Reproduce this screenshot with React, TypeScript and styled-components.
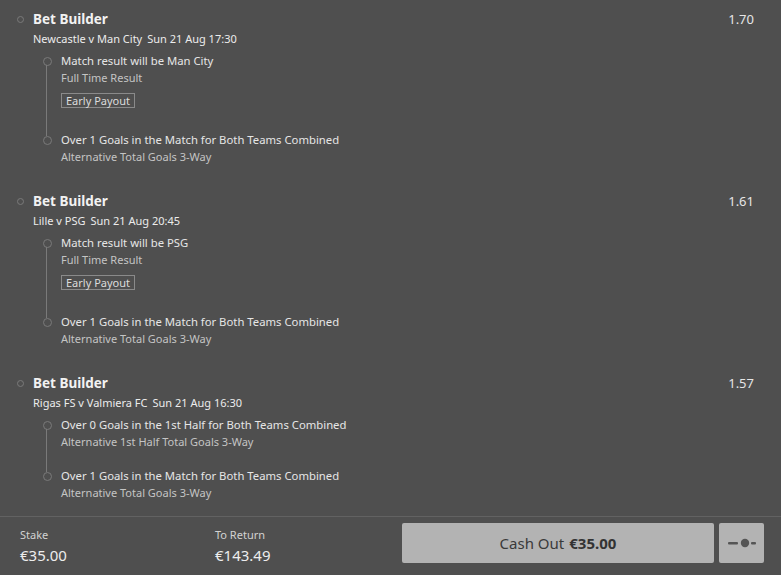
import React from "react";
import styled, { createGlobalStyle } from "styled-components";

const Global = createGlobalStyle`
  html, body { margin: 0; padding: 0; background: #4f4f4f; }
  body { font-family: "Noto Sans", "Open Sans", sans-serif; color: #e8e8e8; }
  * { box-sizing: border-box; }
`;

const Page = styled.div`
  width: 781px;
  height: 575px;
  display: flex;
  flex-direction: column;
  background: #4f4f4f;
  overflow: hidden;
`;

const List = styled.div`
  flex: 1;
  display: flex;
  flex-direction: column;
  overflow: hidden;
`;

const Bet = styled.section`
  padding: 9px 27px 17px 0;
  display: flex;
  flex-direction: column;
`;

const Header = styled.div`
  display: flex;
  align-items: center;
  height: 20px;
`;

const Ring = styled.span`
  width: 7px;
  height: 7px;
  border-radius: 50%;
  border: 1px solid #7a7a7a;
  margin: 0 9px 0 17px;
  flex: none;
`;

const Title = styled.h2`
  margin: 0;
  flex: 1;
  font-size: 13.5px;
  font-weight: 700;
  color: #f2f2f2;
  line-height: 20px;
`;

const Odds = styled.span`
  font-size: 13px;
  color: #e6e6e6;
`;

const Event = styled.div`
  margin: 2px 0 0 33px;
  font-size: 11px;
  line-height: 16px;
  color: #ececec;
  display: flex;
  gap: 5px;
`;

const Legs = styled.ul`
  list-style: none;
  margin: 5px 0 0;
  padding: 0 0 0 61px;
  display: flex;
  flex-direction: column;
  gap: 17px;
`;

const Leg = styled.li`
  position: relative;
  display: flex;
  flex-direction: column;
  &::before {
    content: "";
    position: absolute;
    left: -18px;
    top: 5px;
    width: 7px;
    height: 7px;
    border-radius: 50%;
    border: 1px solid #7a7a7a;
  }
  &:not(:last-child)::after {
    content: "";
    position: absolute;
    left: -15px;
    top: 13px;
    bottom: -22px;
    width: 1px;
    background: #7a7a7a;
  }
`;

const Selection = styled.div`
  font-size: 11.3px;
  line-height: 18px;
  color: #e6e6e6;
`;

const Market = styled.div`
  font-size: 11px;
  line-height: 16px;
  color: #c4c4c4;
`;

const Badge = styled.span`
  align-self: flex-start;
  margin: 7px 0 6px;
  height: 15px;
  padding: 0 4px;
  border: 1px solid #8a8a8a;
  font-size: 11px;
  line-height: 13px;
  color: #dcdcdc;
`;

const Footer = styled.footer`
  flex: none;
  height: 59px;
  border-top: 1px solid #626262;
  display: flex;
  align-items: flex-start;
  padding: 6px 17px 0 20px;
`;

const Info = styled.div<{ $w: number }>`
  width: ${(p) => p.$w}px;
  display: flex;
  flex-direction: column;
  padding-top: 4px;
`;

const InfoLabel = styled.span`
  font-size: 11px;
  line-height: 16px;
  color: #d2d2d2;
`;

const InfoValue = styled.span`
  font-size: 15px;
  line-height: 24px;
  color: #ededed;
`;

const CashOut = styled.button`
  width: 312px;
  height: 40px;
  border: none;
  border-radius: 2px;
  background: #b3b3b3;
  color: #3a3a3a;
  font-family: inherit;
  font-size: 15px;
  display: flex;
  align-items: center;
  justify-content: center;
  gap: 5px;
  cursor: pointer;
  b { font-weight: 700; color: #333; }
`;

const SliderBtn = styled.button`
  width: 45px;
  height: 40px;
  margin-left: 5px;
  border: none;
  border-radius: 2px;
  background: #b3b3b3;
  display: flex;
  align-items: center;
  justify-content: center;
  padding: 0;
`;

type LegData = { sel: string; market: string; early?: boolean };
type BetData = { odds: string; event: string; date: string; legs: LegData[] };

const bets: BetData[] = [
  {
    odds: "1.70",
    event: "Newcastle v Man City",
    date: "Sun 21 Aug 17:30",
    legs: [
      { sel: "Match result will be Man City", market: "Full Time Result", early: true },
      { sel: "Over 1 Goals in the Match for Both Teams Combined", market: "Alternative Total Goals 3-Way" },
    ],
  },
  {
    odds: "1.61",
    event: "Lille v PSG",
    date: "Sun 21 Aug 20:45",
    legs: [
      { sel: "Match result will be PSG", market: "Full Time Result", early: true },
      { sel: "Over 1 Goals in the Match for Both Teams Combined", market: "Alternative Total Goals 3-Way" },
    ],
  },
  {
    odds: "1.57",
    event: "Rigas FS v Valmiera FC",
    date: "Sun 21 Aug 16:30",
    legs: [
      { sel: "Over 0 Goals in the 1st Half for Both Teams Combined", market: "Alternative 1st Half Total Goals 3-Way" },
      { sel: "Over 1 Goals in the Match for Both Teams Combined", market: "Alternative Total Goals 3-Way" },
    ],
  },
];

export default function App() {
  return (
    <Page>
      <Global />
      <List>
        {bets.map((b, i) => (
          <Bet key={i}>
            <Header>
              <Ring />
              <Title>Bet Builder</Title>
              <Odds>{b.odds}</Odds>
            </Header>
            <Event>
              <span>{b.event}</span>
              <span>{b.date}</span>
            </Event>
            <Legs>
              {b.legs.map((l, j) => (
                <Leg key={j}>
                  <Selection>{l.sel}</Selection>
                  <Market>{l.market}</Market>
                  {l.early && <Badge>Early Payout</Badge>}
                </Leg>
              ))}
            </Legs>
          </Bet>
        ))}
      </List>
      <Footer>
        <Info $w={195}>
          <InfoLabel>Stake</InfoLabel>
          <InfoValue>€35.00</InfoValue>
        </Info>
        <Info $w={187}>
          <InfoLabel>To Return</InfoLabel>
          <InfoValue>€143.49</InfoValue>
        </Info>
        <CashOut>
          Cash Out <b>€35.00</b>
        </CashOut>
        <SliderBtn aria-label="Partial cash out">
          <svg width="28" height="10" viewBox="0 0 28 10">
            <rect x="0" y="4" width="10" height="2.5" rx="1" fill="#555" />
            <circle cx="17" cy="5" r="4.2" fill="#555" />
            <rect x="23" y="4" width="5" height="2.5" rx="1" fill="#555" />
          </svg>
        </SliderBtn>
      </Footer>
    </Page>
  );
}
